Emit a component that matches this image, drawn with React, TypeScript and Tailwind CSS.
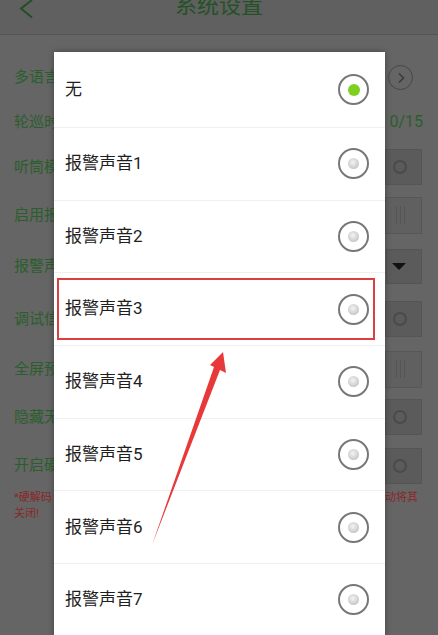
import React from "react";

const FONT = { fontFamily: '"Roboto", "Noto Sans CJK SC", "Noto Sans", sans-serif' };

type RowKind = "nav" | "count" | "check" | "slider" | "select";

const settings: { label: string; h: string; kind: RowKind }[] = [
  { label: "多语言", h: "h-[45px]", kind: "nav" },
  { label: "轮巡时", h: "h-[44px]", kind: "count" },
  { label: "听筒模", h: "h-[46px]", kind: "check" },
  { label: "启用报", h: "h-[50px]", kind: "slider" },
  { label: "报警声", h: "h-[53px]", kind: "select" },
  { label: "调试信", h: "h-[52px]", kind: "check" },
  { label: "全屏预", h: "h-[48px]", kind: "slider" },
  { label: "隐藏无", h: "h-[48px]", kind: "check" },
  { label: "开启硬", h: "h-[49px]", kind: "check" },
];

const sounds = ["无", "报警声音1", "报警声音2", "报警声音3", "报警声音4", "报警声音5", "报警声音6", "报警声音7"];

function Widget({ kind }: { kind: RowKind }) {
  if (kind === "nav") {
    return (
      <div className="w-[25px] h-[25px] mr-[9px] rounded-full border-[1.5px] border-[#474747] flex items-center justify-center">
        <svg width="10" height="12" viewBox="0 0 10 12">
          <polyline points="3,1.5 7.5,6 3,10.5" fill="none" stroke="#3a3a3a" strokeWidth="1.6" />
        </svg>
      </div>
    );
  }
  if (kind === "count") {
    return <span className="text-[16px] text-[#2a5f2c] mr-[-1px]">0/15</span>;
  }
  if (kind === "select") {
    return (
      <div className="w-[36px] h-[35px] bg-[#5b5b5b] border border-[#555] flex items-center justify-start pl-[5px]">
        <svg width="14" height="8" viewBox="0 0 14 8">
          <polygon points="0,0 14,0 7,7" fill="#111" />
        </svg>
      </div>
    );
  }
  if (kind === "slider") {
    return (
      <div className="w-[37px] h-[37px] bg-[#606060] border border-[#575757] flex items-center pl-[10px] gap-[3px]">
        <span className="w-px h-[18px] bg-[#555]" />
        <span className="w-px h-[18px] bg-[#555]" />
        <span className="w-px h-[18px] bg-[#555]" />
      </div>
    );
  }
  return (
    <div className="w-[37px] h-[36px] bg-[#5b5b5b] border border-[#555] flex items-center pl-[7px]">
      <span className="w-[14px] h-[14px] rounded-full border-2 border-[#4a4a4a]" />
    </div>
  );
}

function Radio({ on }: { on: boolean }) {
  return (
    <div className="w-[31px] h-[31px] rounded-full border-2 border-[#777777] flex items-center justify-center">
      {on ? (
        <span className="w-[12px] h-[12px] rounded-full bg-[#7fd021]" />
      ) : (
        <span className="w-[11px] h-[11px] rounded-full bg-[radial-gradient(circle_at_45%_40%,#f4f4f4_0%,#d2d2d2_55%,#b4b4b4_100%)]" />
      )}
    </div>
  );
}

export default function App() {
  return (
    <div className="relative w-[438px] h-[635px] overflow-hidden bg-[#656565]" style={FONT}>
      {/* settings page under the dim layer */}
      <header className="h-[35px] bg-[#606060] border-b border-[#555555] flex items-start relative">
        <svg className="absolute left-[18px] top-0" width="16" height="19" viewBox="0 0 16 19">
          <polyline points="14,0 3,8.5 14,17.5" fill="none" stroke="#234f25" strokeWidth="2" />
        </svg>
        <h1 className="w-full text-center text-[22px] leading-[26px] mt-[-7px] text-[#245226]">系统设置</h1>
      </header>

      <div className="pt-[20px] flex flex-col">
        {settings.map((s, i) => (
          <div key={i} className={`${s.h} flex items-center justify-between pl-[14px] pr-[16px]`}>
            <span className="text-[15px] text-[#2a5f2c]">{s.label}</span>
            <Widget kind={s.kind} />
          </div>
        ))}
        <div className="pl-[14px] pr-[20px] text-[11px] leading-[16px] text-[#882828]">
          <div className="flex justify-between">
            <span>*硬解码</span>
            <span>动将其</span>
          </div>
          <div>关闭!</div>
        </div>
      </div>

      {/* sound picker dialog */}
      <div className="absolute left-[54px] top-[52px] w-[331px] bg-white shadow-[0_0_6px_rgba(0,0,0,0.35)]">
        {sounds.map((s, i) => (
          <div
            key={s}
            className={`${i === 0 ? "h-[76px]" : "h-[72.7px]"} flex items-center justify-between pl-[11px] pr-[16px] border-b border-[#efefef]`}
          >
            <span className="text-[17px] text-[#1e1e1e]">{s}</span>
            <Radio on={i === 0} />
          </div>
        ))}
      </div>

      <div className="absolute left-[57px] top-[278px] w-[318px] h-[62px] border-2 border-[#d9403f]" />

      {/* pointer arrow */}
      <svg className="absolute left-0 top-0 pointer-events-none" width="438" height="635" viewBox="0 0 438 635">
        <polygon points="223,352 226,373 220,370 152,545 214,367 210,365" fill="#e8393a" />
      </svg>
    </div>
  );
}
